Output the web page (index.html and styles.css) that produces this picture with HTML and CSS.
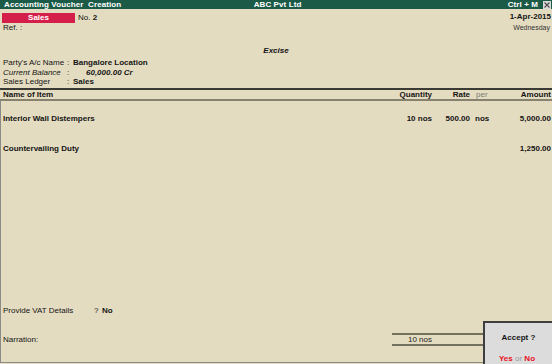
FILE: index.html
```html
<!DOCTYPE html>
<html>
<head>
<meta charset="utf-8">
<link rel="stylesheet" href="styles.css">
</head>
<body>
<div class="screen">
  <div class="titlebar">
    <span class="t-left">Accounting Voucher&nbsp; Creation</span>
    <span class="t-center">ABC Pvt Ltd</span>
    <span class="t-right">Ctrl + M <span class="close"><svg width="8" height="8" viewBox="0 0 8 8"><path d="M1.5 1.5 L6.5 6.5 M6.5 1.5 L1.5 6.5" stroke="#4a4a4a" stroke-width="1.1" fill="none"/></svg></span></span>
  </div>

  <div class="vhead">
    <div class="vh-left">
      <div class="vtype-row"><span class="vtype">Sales</span><span class="vno">No. <b>2</b></span></div>
      <div class="ref">Ref. :</div>
    </div>
    <div class="vh-right">
      <div class="date">1-Apr-2015</div>
      <div class="day">Wednesday</div>
    </div>
  </div>

  <div class="excise">Excise</div>

  <div class="party">
    <span class="lbl">Party's A/c Name</span><span class="colon">:</span><span class="val">Bangalore Location</span>
    <span class="lbl it">Current Balance</span><span class="colon">:</span><span class="val it bal">60,000.00 Cr</span>
    <span class="lbl">Sales Ledger</span><span class="colon">:</span><span class="val">Sales</span>
  </div>

  <div class="items">
    <div class="ihead cols">
      <span>Name of Item</span>
      <span class="r">Quantity</span>
      <span class="r">Rate</span>
      <span class="per">per</span>
      <span class="r">Amount</span>
    </div>
    <div class="iframe">
      <div class="ibody">
        <div class="row cols first">
          <span>Interior Wall Distempers</span>
          <span class="r">10 nos</span>
          <span class="r">500.00</span>
          <span class="unit">nos</span>
          <span class="r">5,000.00</span>
        </div>
        <div class="row cols second">
          <span>Countervailing Duty</span>
          <span></span>
          <span></span>
          <span></span>
          <span class="r">1,250.00</span>
        </div>
      </div>
      <div class="ifoot">
        <div class="vat"><span class="vat-lbl">Provide VAT Details</span><span class="q">?</span><b>No</b></div>
        <div class="narr">
          <span class="narr-lbl">Narration:</span>
          <div class="total"><span class="total-qty">10 nos</span></div>
        </div>
      </div>
    </div>
  </div>

  <div class="accept">
    <div class="acc-q">Accept ?</div>
    <div class="acc-yn"><span class="red">Yes</span> <span class="or">or</span> <span class="red">No</span></div>
  </div>
</div>
</body>
</html>
```

FILE: styles.css
```css
* { box-sizing: border-box; }
html, body {
  margin: 0;
  padding: 0;
  width: 552px;
  height: 364px;
  overflow: hidden;
  background: #e4dcc1;
}
body {
  font-family: "Liberation Sans", Arial, sans-serif;
  font-size: 8px;
  color: #141414;
}
.screen {
  position: relative;
  width: 552px;
  height: 364px;
  background: #e4dcc1;
}

/* title bar */
.titlebar {
  height: 9px;
  background: #1c5a48;
  color: #ffffff;
  font-weight: bold;
  font-size: 8px;
  line-height: 9px;
  display: flex;
  align-items: center;
  padding-left: 4px;
  padding-right: 1px;
  letter-spacing: 0.1px;
}
.t-left { flex: 1; }
.t-center { flex: 0 0 auto; }
.t-right {
  flex: 1;
  display: flex;
  justify-content: flex-end;
  align-items: center;
}
.close {
  display: block;
  width: 8px;
  height: 8px;
  margin-left: 5px;
  background: #dadada;
}
.close svg { display: block; }

/* voucher header */
.vhead {
  display: flex;
  justify-content: space-between;
  padding: 0 1px 0 2px;
}
.vtype-row {
  display: flex;
  margin-top: 4px;
  height: 10px;
  line-height: 10px;
}
.vtype {
  width: 73px;
  background: #d51f4b;
  color: #fff;
  font-weight: bold;
  text-align: center;
}
.vno { margin-left: 3px; }
.ref {
  line-height: 10px;
  padding-left: 1px;
}
.vh-right {
  text-align: right;
  padding-top: 3px;
}
.date {
  font-weight: bold;
  line-height: 10px;
}
.day {
  font-size: 7px;
  line-height: 11px;
  color: #333;
  padding-right: 1px;
}

.excise {
  margin-top: 13px;
  text-align: center;
  font-weight: bold;
  font-style: italic;
  line-height: 10px;
}

.party {
  margin-top: 2px;
  display: grid;
  grid-template-columns: 64px 6px auto;
  grid-auto-rows: 9.5px;
  line-height: 9.5px;
  padding-left: 3px;
  width: 260px;
}
.colon { text-align: left; }
.val { font-weight: bold; }
.it { font-style: italic; }
.bal { padding-left: 13px; }

/* items table */
.items {
  margin-top: 1.5px;
  border-top: 2px solid #3b3b36;
  height: 275px;
  display: flex;
  flex-direction: column;
}
.cols {
  display: grid;
  grid-template-columns: 1fr 60px 38px 35px 46px;
  padding-left: 3px;
  padding-right: 1px;
}
.r { text-align: right; }
.ihead {
  height: 11px;
  line-height: 9px;
  font-weight: bold;
  border-bottom: 2px solid #86826f;
}
.per {
  color: #7a7a72;
  font-weight: normal;
  padding-left: 6px;
}
.unit { padding-left: 5px; }
.iframe {
  flex: 1;
  display: flex;
  flex-direction: column;
  border-left: 1px solid #8a8a86;
  border-bottom: 1px solid #8a8a86;
}
.ibody { flex: 1; }
.row {
  font-weight: bold;
  line-height: 11px;
  padding-left: 2px;
}
.first { margin-top: 12px; }
.second { margin-top: 19px; }

.ifoot {
  padding-bottom: 16px;
  padding-left: 2px;
}
.vat {
  line-height: 11px;
  display: flex;
}
.vat-lbl { width: 91px; }
.q { width: 8px; }
.narr {
  margin-top: 17px;
  height: 13px;
  display: flex;
  align-items: center;
}
.narr-lbl { flex: 1; line-height: 9px; }
.total {
  width: 160px;
  height: 13px;
  border-top: 2px solid #75715f;
  border-bottom: 2px solid #75715f;
  line-height: 9px;
}
.total-qty {
  display: block;
  width: 40px;
  text-align: right;
  color: #222;
}

/* accept dialog */
.accept {
  position: absolute;
  left: 483px;
  top: 321px;
  width: 69px;
  height: 43px;
  background: #dcdcdc;
  border-top: 2px solid #3e3e3e;
  border-left: 2px solid #3e3e3e;
  text-align: center;
}
.acc-q {
  margin-top: 10px;
  font-weight: bold;
  line-height: 10px;
}
.acc-yn {
  margin-top: 11px;
  line-height: 10px;
  font-weight: bold;
  padding-right: 3px;
}
.red { color: #e8101c; }
.or { color: #9a9a9a; font-weight: normal; }
```
